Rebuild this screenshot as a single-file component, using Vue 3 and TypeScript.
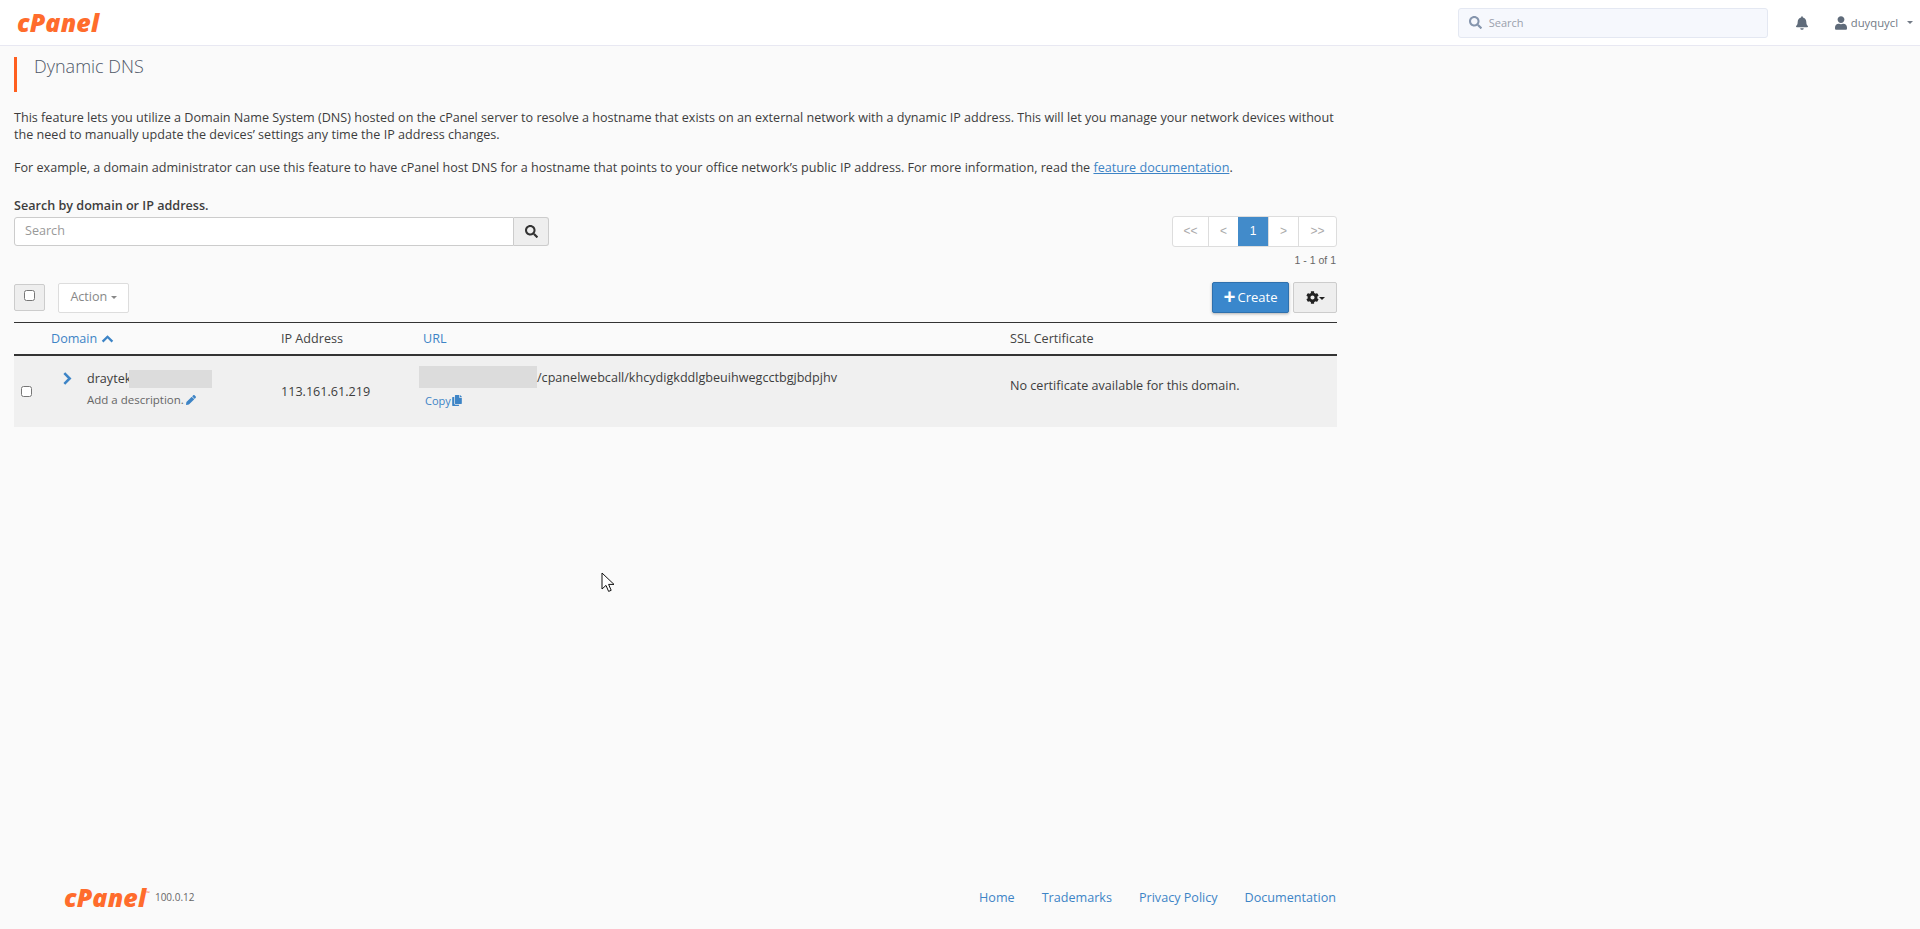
<script setup lang="ts">
const columns = ["IP Address", "URL", "SSL Certificate"];
const footerLinks = ["Home", "Trademarks", "Privacy Policy", "Documentation"];
const pages = ["<<", "<", "1", ">", ">>"];

const searchPath = "M505 442.7L405.3 343c-4.5-4.5-10.6-7-17-7H372c27.6-35.3 44-79.7 44-128C416 93.1 322.9 0 208 0S0 93.1 0 208s93.1 208 208 208c48.3 0 92.7-16.4 128-44v16.3c0 6.4 2.5 12.5 7 17l99.7 99.7c9.4 9.4 24.6 9.4 33.9 0l28.3-28.3c9.4-9.4 9.4-24.6.1-34zM208 336c-70.7 0-128-57.2-128-128 0-70.7 57.2-128 128-128 70.7 0 128 57.2 128 128 0 70.7-57.2 128-128 128z";
</script>

<template>
  <div class="app">
    <header class="topbar">
      <span class="logo">cPanel</span>
      <div class="top-right">
        <div class="top-search">
          <svg class="top-search-icon" viewBox="0 0 512 512"><path :d="searchPath" /></svg>
          <span>Search</span>
        </div>
        <svg class="bell" viewBox="0 0 448 512"><path d="M224 512c35.32 0 63.97-28.65 63.97-64H160.03c0 35.35 28.65 64 63.97 64zm215.39-149.71c-19.32-20.76-55.47-51.99-55.47-154.29 0-77.7-54.48-139.9-127.94-155.16V32c0-17.67-14.32-32-31.98-32s-31.98 14.33-31.98 32v20.84C118.56 68.1 64.08 130.3 64.08 208c0 102.3-36.15 133.53-55.47 154.29-6 6.45-8.66 14.16-8.61 21.71.11 16.4 12.98 32 32.1 32h383.8c19.12 0 32-15.6 32.1-32 .05-7.55-2.61-15.27-8.61-21.71z" /></svg>
        <div class="user">
          <svg class="user-icon" viewBox="0 0 448 512"><path d="M224 256c70.7 0 128-57.3 128-128S294.7 0 224 0 96 57.3 96 128s57.3 128 128 128zm89.6 32h-16.7c-22.2 10.2-46.9 16-72.9 16s-50.6-5.8-72.9-16h-16.7C60.2 288 0 348.2 0 422.4V464c0 26.5 21.5 48 48 48h352c26.5 0 48-21.5 48-48v-41.6c0-74.2-60.2-134.4-134.4-134.4z" /></svg>
          <span>duyquycl</span>
          <i class="caret"></i>
        </div>
      </div>
    </header>

    <main class="page">
      <h1 class="title">Dynamic DNS</h1>
      <p class="intro">This feature lets you utilize a Domain Name System (DNS) hosted on the cPanel server to resolve a hostname that exists on an external network with a dynamic IP address. This will let you manage your network devices without the need to manually update the devices’ settings any time the IP address changes.</p>
      <p class="intro second">For example, a domain administrator can use this feature to have cPanel host DNS for a hostname that points to your office network’s public IP address. For more information, read the <a class="doc-link">feature documentation</a>.</p>

      <div class="search-row">
        <div class="search-col">
          <label class="search-label">Search by domain or IP address.</label>
          <div class="search-group">
            <div class="search-input">Search</div>
            <button class="search-btn">
              <svg viewBox="0 0 512 512"><path :d="searchPath" /></svg>
            </button>
          </div>
        </div>
        <div class="paging-col">
          <div class="pagination">
            <span v-for="p in pages" :key="p" class="page-cell" :class="{ active: p === '1' }">{{ p }}</span>
          </div>
          <div class="paging-info">1 - 1 of 1</div>
        </div>
      </div>

      <div class="toolbar">
        <div class="select-all"><input type="checkbox" /></div>
        <button class="action-btn">Action <i class="caret"></i></button>
        <button class="create-btn"><span class="plus">+</span>Create</button>
        <button class="gear-btn">
          <svg viewBox="0 0 512 512"><path d="M487.4 315.7l-42.6-24.6c4.3-23.2 4.3-47 0-70.2l42.6-24.6c4.9-2.8 7.1-8.6 5.5-14-11.1-35.6-30-67.8-54.7-94.6-3.8-4.1-10-5.1-14.8-2.3L380.8 110c-17.9-15.4-38.5-27.3-60.8-35.1V25.8c0-5.6-3.9-10.5-9.4-11.7-36.7-8.2-74.3-7.8-109.2 0-5.5 1.2-9.4 6.1-9.4 11.7V75c-22.2 7.9-42.8 19.8-60.8 35.1L88.7 85.5c-4.9-2.8-11-1.9-14.8 2.3-24.7 26.7-43.6 58.9-54.7 94.6-1.7 5.4.6 11.2 5.5 14L67.3 221c-4.3 23.2-4.3 47 0 70.2l-42.6 24.6c-4.9 2.8-7.1 8.6-5.5 14 11.1 35.6 30 67.8 54.7 94.6 3.8 4.1 10 5.1 14.8 2.3l42.6-24.6c17.9 15.4 38.5 27.3 60.8 35.1v49.2c0 5.6 3.9 10.5 9.4 11.7 36.7 8.2 74.3 7.8 109.2 0 5.5-1.2 9.4-6.1 9.4-11.7v-49.2c22.2-7.9 42.8-19.8 60.8-35.1l42.6 24.6c4.9 2.8 11 1.9 14.8-2.3 24.7-26.7 43.6-58.9 54.7-94.6 1.5-5.5-.7-11.3-5.6-14.1zM256 336c-44.1 0-80-35.9-80-80s35.9-80 80-80 80 35.9 80 80-35.9 80-80 80z" /></svg>
          <i class="caret dark"></i>
        </button>
      </div>

      <table class="grid">
        <colgroup>
          <col style="width: 29px" />
          <col style="width: 230px" />
          <col style="width: 142px" />
          <col style="width: 587px" />
          <col />
        </colgroup>
        <thead>
          <tr>
            <th></th>
            <th class="sortable">
              Domain
              <svg class="sort-up" viewBox="0 0 14 9"><path d="M1.5 7.5 7 2l5.5 5.5" /></svg>
            </th>
            <th v-for="c in columns" :key="c" :class="{ sortable: c === 'URL' }">{{ c }}</th>
          </tr>
        </thead>
        <tbody>
          <tr>
            <td class="check-cell"><input type="checkbox" /></td>
            <td class="domain-cell">
              <svg class="expand" viewBox="0 0 9 14"><path d="M2 2l5 5-5 5" /></svg>
              <div class="domain-name">draytek<span class="redact short"></span></div>
              <div class="desc">
                Add a description.<svg class="pencil" viewBox="0 0 512 512"><path d="M497.9 142.1l-46.1 46.1c-4.7 4.7-12.3 4.7-17 0l-111-111c-4.7-4.7-4.7-12.3 0-17l46.1-46.1c18.7-18.7 49.1-18.7 67.9 0l60.1 60.1c18.8 18.7 18.8 49.1 0 67.9zM284.2 99.8L21.6 362.4.4 483.9c-2.9 16.4 11.4 30.6 27.8 27.8l121.5-21.3 262.6-262.6c4.7-4.7 4.7-12.3 0-17l-111-111c-4.8-4.7-12.4-4.7-17.1 0z" /></svg>
              </div>
            </td>
            <td class="ip-cell">113.161.61.219</td>
            <td class="url-cell">
              <div class="url-line"><span class="redact long"></span>/cpanelwebcall/khcydigkddlgbeuihwegcctbgjbdpjhv</div>
              <a class="copy">Copy<svg viewBox="0 0 448 512"><path d="M320 448v40c0 13.255-10.745 24-24 24H24c-13.255 0-24-10.745-24-24V120c0-13.255 10.745-24 24-24h72v296c0 30.879 25.121 56 56 56h168zm0-344V0H152c-13.255 0-24 10.745-24 24v368c0 13.255 10.745 24 24 24h272c13.255 0 24-10.745 24-24V128H344c-13.2 0-24-10.8-24-24zm120.971-31.029L375.029 7.029A24 24 0 0 0 358.059 0H352v96h96v-6.059a24 24 0 0 0-7.029-16.97z" /></svg></a>
            </td>
            <td class="ssl-cell">No certificate available for this domain.</td>
          </tr>
        </tbody>
      </table>
    </main>

    <footer class="footer">
      <div class="foot-brand">
        <span class="logo foot-logo">cPanel<sup>™</sup></span>
        <span class="version">100.0.12</span>
      </div>
      <nav class="foot-links">
        <a v-for="l in footerLinks" :key="l">{{ l }}</a>
      </nav>
    </footer>

    <svg class="cursor" viewBox="0 0 14 21"><path d="M1 1v16l4-3.6 2.6 6 2.6-1.1-2.6-5.9H13z" /></svg>
  </div>
</template>

<style>
html, body {
  margin: 0;
  background: #fafafa;
}
</style>

<style scoped>
.app {
  position: relative;
  min-height: 929px;
  display: flex;
  flex-direction: column;
  box-sizing: border-box;
  background: #fafafa;
  color: #3d3d3d;
  font-family: "Open Sans", "Liberation Sans", sans-serif;
  font-size: 12.6px;
  line-height: 17px;
  overflow: hidden;
}

.topbar {
  height: 45px;
  flex: none;
  background: #fff;
  border-bottom: 1px solid #e8e8f2;
  display: flex;
  align-items: center;
  justify-content: space-between;
  padding: 0 7px 0 17px;
}

.logo {
  font-family: "Open Sans", sans-serif;
  font-weight: 800;
  font-style: italic;
  font-size: 25px;
  letter-spacing: 0.1px;
  color: #ff6c2c;
  line-height: 24px;
  margin-top: -1px;
}

.top-right {
  display: flex;
  align-items: center;
}

.top-search {
  width: 310px;
  height: 30px;
  box-sizing: border-box;
  background: #f6f8fd;
  border: 1px solid #e4e8f2;
  border-radius: 3px;
  display: flex;
  align-items: center;
  padding-left: 10px;
  color: #9aa0ac;
  font-size: 11px;
  margin-right: 28px;
}

.top-search-icon {
  width: 13px;
  height: 13px;
  fill: #8595ad;
  margin-right: 7px;
}

.bell {
  width: 12px;
  height: 14px;
  fill: #5f6b7a;
  margin-right: 27px;
}

.user {
  display: flex;
  align-items: center;
  color: #737b86;
  font-size: 11.3px;
}

.user-icon {
  width: 12px;
  height: 14px;
  fill: #5f6b7a;
  margin-right: 4px;
}

.caret {
  display: inline-block;
  border-top: 4px solid #737b86;
  border-left: 4px solid transparent;
  border-right: 4px solid transparent;
  vertical-align: middle;
}

.user .caret {
  margin-left: 9px;
  border-width: 3px 3px 0;
}

.page {
  padding: 11px 0 0 14px;
  width: 1323px;
}

.title {
  margin: 0;
  height: 35px;
  box-sizing: border-box;
  border-left: 3px solid #ff5f1f;
  padding-left: 17px;
  font-size: 18px;
  font-weight: 300;
  line-height: 19px;
  color: #4f5868;
}

.intro {
  margin: 17px 0 0;
  line-height: 17px;
}

.intro.second {
  margin-top: 16px;
}

.doc-link {
  color: #3d84c6;
  text-decoration: underline;
}

.search-row {
  display: flex;
  justify-content: space-between;
  margin-top: 21px;
}

.search-label {
  display: block;
  font-weight: 600;
  line-height: 17px;
  margin-bottom: 3px;
}

.search-group {
  display: flex;
  width: 535px;
  height: 29px;
}

.search-input {
  flex: 1;
  box-sizing: border-box;
  background: #fff;
  border: 1px solid #ccc;
  border-radius: 3px 0 0 3px;
  padding-left: 10px;
  line-height: 25px;
  color: #999;
}

.search-btn {
  width: 35px;
  box-sizing: border-box;
  background: #eee;
  border: 1px solid #ccc;
  border-left: 0;
  border-radius: 0 3px 3px 0;
  padding: 0;
  display: flex;
  align-items: center;
  justify-content: center;
}

.search-btn svg {
  width: 13px;
  height: 13px;
  fill: #333;
}

.paging-col {
  padding-top: 19px;
  text-align: right;
}

.pagination {
  display: flex;
  height: 31px;
  box-sizing: border-box;
  border: 1px solid #ddd;
  border-radius: 3px;
  background: #fff;
  overflow: hidden;
}

.page-cell {
  font-family: "Liberation Sans", sans-serif;
  font-size: 12px;
  line-height: 29px;
  color: #aaa;
  text-align: center;
  border-left: 1px solid #ddd;
  width: 29px;
}

.page-cell:first-child {
  width: 35px;
  border-left: 0;
}

.page-cell:last-child {
  width: 37px;
}

.page-cell.active {
  background: #428bca;
  color: #fff;
  border-left: 0;
  width: 30px;
}

.paging-info {
  font-family: "Liberation Sans", sans-serif;
  font-size: 10.5px;
  color: #666;
  line-height: 14px;
  margin-top: 6px;
  padding-right: 1px;
}

.toolbar {
  display: flex;
  align-items: center;
  margin-top: 15px;
  height: 31px;
}

.select-all {
  width: 31px;
  height: 27px;
  box-sizing: border-box;
  background: #eee;
  border: 1px solid #ccc;
  border-radius: 2px;
  display: flex;
  align-items: center;
  justify-content: center;
  padding-bottom: 4px;
  margin-right: 13px;
}

input[type="checkbox"] {
  margin: 0;
  width: 11px;
  height: 11px;
}

.action-btn {
  width: 71px;
  height: 30px;
  background: #fff;
  border: 1px solid #ddd;
  border-radius: 2px;
  font: inherit;
  color: #888;
  padding: 0 0 2px;
}

.action-btn .caret {
  border-width: 3px 3px 0;
  border-top-color: #888;
}

.create-btn {
  margin-left: auto;
  width: 77px;
  height: 31px;
  box-sizing: border-box;
  background: #3a87cc;
  border: 1px solid #2e70ad;
  border-radius: 2px;
  box-shadow: 0 1px 3px rgba(0, 0, 0, 0.3);
  color: #fff;
  font: inherit;
  font-size: 13px;
  padding: 0;
}

.plus {
  font-size: 21px;
  font-weight: 700;
  line-height: 13px;
  vertical-align: -2px;
  margin-right: 2px;
}

.gear-btn {
  margin-left: 4px;
  width: 44px;
  height: 31px;
  box-sizing: border-box;
  background: #eee;
  border: 1px solid #ccc;
  border-radius: 2px;
  padding: 0;
}

.gear-btn svg {
  width: 13px;
  height: 13px;
  fill: #222;
  vertical-align: -2px;
}

.caret.dark {
  border-width: 3px 3px 0;
  border-top-color: #222;
}

.grid {
  width: 100%;
  table-layout: fixed;
  border-collapse: collapse;
  margin-top: 9px;
}

.grid th {
  height: 31px;
  padding: 0 8px;
  border-top: 1px solid #333;
  border-bottom: 2px solid #333;
  text-align: left;
  font-weight: 400;
  color: #444;
}

.grid th.sortable {
  color: #3d84c6;
}

.sort-up {
  width: 13px;
  height: 8px;
  fill: none;
  stroke: #3d84c6;
  stroke-width: 2.6;
}

.grid td {
  background: #f0f0f0;
  height: 72px;
  padding: 0 8px;
  box-sizing: border-box;
  vertical-align: top;
}

.grid td.check-cell {
  padding: 28px 0 0 7px;
}

.grid td.domain-cell {
  position: relative;
  padding: 13px 8px 0 44px;
}

.expand {
  position: absolute;
  left: 19px;
  top: 15px;
  width: 10px;
  height: 15px;
  fill: none;
  stroke: #3d84c6;
  stroke-width: 2.4;
}

.domain-name {
  display: flex;
  align-items: center;
  height: 19px;
}

.redact {
  display: block;
  background: #dcdcdc;
}

.redact.short {
  width: 83px;
  height: 18px;
  margin-left: -2px;
}

.desc {
  margin-top: 3px;
  font-size: 11.5px;
  color: #666;
}

.pencil {
  width: 10px;
  height: 10px;
  fill: #3d84c6;
  margin-left: 2px;
  vertical-align: -1px;
}

.grid td.ip-cell {
  padding-top: 27px;
}

.grid td.url-cell {
  padding: 10px 0 0 4px;
}

.url-line {
  display: flex;
  align-items: center;
  height: 22px;
}

.redact.long {
  width: 118px;
  height: 22px;
}

.copy {
  display: block;
  margin: 4px 0 0 6px;
  color: #3d84c6;
  font-size: 11px;
}

.copy svg {
  width: 10px;
  height: 11px;
  fill: #3d84c6;
  margin-left: 1px;
  vertical-align: -1px;
}

.grid td.ssl-cell {
  padding-top: 21px;
}

.footer {
  margin-top: auto;
  height: 43px;
  display: flex;
  justify-content: space-between;
  align-items: flex-start;
  padding: 0 584px 0 64px;
}

.foot-brand {
  display: flex;
  align-items: center;
}

.foot-logo {
  font-size: 25px;
  margin-top: -1px;
}

.foot-logo sup {
  font-size: 5px;
  font-style: normal;
  font-weight: 400;
  vertical-align: 12px;
  line-height: 0;
  letter-spacing: 0;
}

.version {
  font-size: 10px;
  color: #666;
  margin-left: 5px;
}

.foot-links {
  display: flex;
  gap: 27px;
  font-size: 12.6px;
  line-height: 24px;
  color: #3d84c6;
}

.cursor {
  position: absolute;
  left: 601px;
  top: 572px;
  width: 14px;
  height: 21px;
  fill: #fff;
  stroke: #111;
  stroke-width: 1;
}
</style>
